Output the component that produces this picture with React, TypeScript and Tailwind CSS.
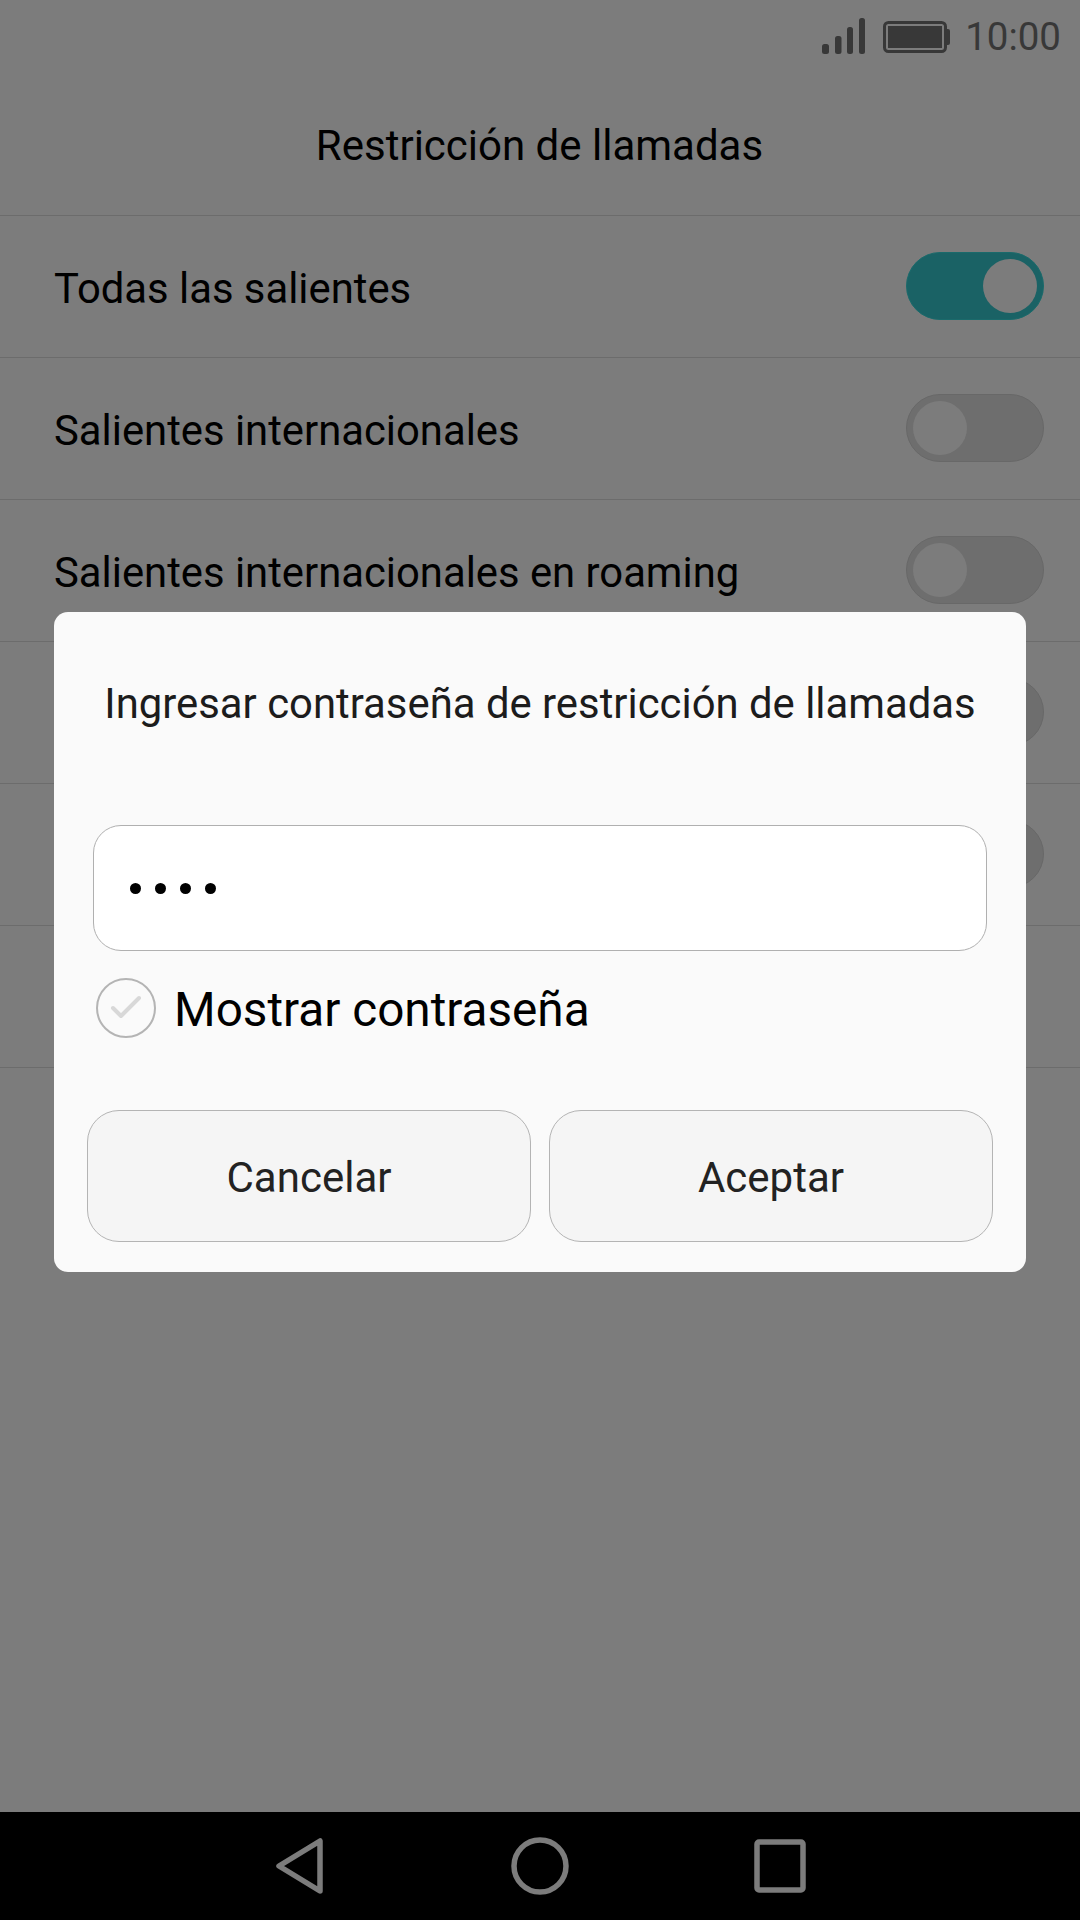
const rows = [
  { label: "Todas las salientes", on: true, toggle: true },
  { label: "Salientes internacionales", on: false, toggle: true },
  { label: "Salientes internacionales en roaming", on: false, toggle: true },
  { label: "", on: false, toggle: true },
  { label: "", on: false, toggle: true },
  { label: "", on: false, toggle: false },
];

function Toggle({ on }: { on: boolean }) {
  return (
    <div
      className={`mb-[2px] flex h-[68px] w-[138px] items-center rounded-full border px-[6px] ${
        on ? "justify-end border-[#1a6a6b] bg-[#1a6265]" : "justify-start border-[#686868] bg-[#6e6e6e]"
      }`}
    >
      <div className="h-[54px] w-[54px] rounded-full bg-[#7c7c7c]" />
    </div>
  );
}

function StatusBar() {
  return (
    <div className="flex h-[72px] items-start justify-end pr-[19px]">
      <svg width="44" height="38" viewBox="0 0 44 38" className="mt-[17px]">
        <g fill="#383838">
          <rect x="0" y="27" width="7" height="10" rx="2.5" />
          <rect x="13" y="19" width="6.5" height="18" rx="2.5" />
          <rect x="25" y="10" width="6" height="27" rx="2.5" />
          <rect x="37" y="1" width="6" height="36" rx="2.5" />
        </g>
      </svg>
      <svg width="68" height="34" viewBox="0 0 68 34" className="ml-[17px] mt-[20px]">
        <rect x="1.5" y="2.5" width="61" height="29" rx="4" fill="none" stroke="#383838" strokeWidth="3" />
        <rect x="5" y="6" width="54" height="22" fill="#383838" />
        <path d="M63 9h2a2 2 0 0 1 2 2v12a2 2 0 0 1-2 2h-2z" fill="#383838" />
      </svg>
      <span className="ml-[14px] mt-[14px] text-[38.5px] leading-[46px] text-[#383838]">10:00</span>
    </div>
  );
}

function NavBar() {
  return (
    <div className="flex h-[108px] items-center justify-center bg-black">
      <svg width="600" height="108" viewBox="0 0 600 108" fill="none" stroke="#7c7c7c" strokeWidth="5.5" strokeLinejoin="round">
        <path d="M39 54 80 29V79Z" />
        <circle cx="300" cy="54" r="26" />
        <rect x="517" y="30" width="46" height="48" rx="2" />
      </svg>
    </div>
  );
}

export default function App() {
  return (
    <div
      className="relative flex h-[1920px] w-[1080px] flex-col overflow-hidden bg-[#7c7c7c] text-black"
      style={{ fontFamily: "Roboto, sans-serif" }}
    >
      <StatusBar />
      <div className="flex h-[143px] items-start justify-center pt-[46px] pr-[1px] text-[42px] leading-[56px]">
        Restricción de llamadas
      </div>
      <div className="flex-1">
        {rows.map((r, i) => (
          <div key={i} className="flex h-[142px] items-center justify-between border-t border-[#6c6c6c] pl-[54px] pr-[36px]">
            <span className="mt-[4px] text-[41.8px] leading-[56px]">{r.label}</span>
            {r.toggle && <Toggle on={r.on} />}
          </div>
        ))}
        <div className="border-t border-[#6c6c6c]" />
      </div>
      <NavBar />

      <div className="absolute left-[54px] top-[612px] flex h-[660px] w-[972px] flex-col rounded-[14px] bg-[#fafafa] px-[33px]">
        <div className="pt-[64px] text-center text-[41.85px] leading-[56px] text-[#1c1c1c] whitespace-nowrap">
          Ingresar contraseña de restricción de llamadas
        </div>
        <div className="mx-[6px] mt-[93px] flex h-[126px] items-center gap-[14px] rounded-[28px] border border-[#b0b0b0] bg-white pl-[36px]">
          {[0, 1, 2, 3].map((d) => (
            <span key={d} className="h-[11px] w-[11px] rounded-full bg-black" />
          ))}
        </div>
        <div className="mt-[27px] flex items-start pl-[9px]">
          <svg width="60" height="60" viewBox="0 0 60 60" fill="none">
            <circle cx="30" cy="30" r="29" stroke="#b4b4b4" strokeWidth="2" />
            <path d="M17 30 25 38 43 20" stroke="#d8d8d8" strokeWidth="4" strokeLinecap="round" strokeLinejoin="round" />
          </svg>
          <span className="ml-[18px] mt-[2px] text-[47.7px] leading-[60px]">Mostrar contraseña</span>
        </div>
        <div className="mt-[70px] flex gap-[18px]">
          {["Cancelar", "Aceptar"].map((b) => (
            <div
              key={b}
              className="flex h-[132px] flex-1 items-center justify-center rounded-[32px] border border-[#b4b4b4] bg-[#f5f5f5] pt-[2px] text-[42px] text-[#222222]"
            >
              {b}
            </div>
          ))}
        </div>
      </div>
    </div>
  );
}
